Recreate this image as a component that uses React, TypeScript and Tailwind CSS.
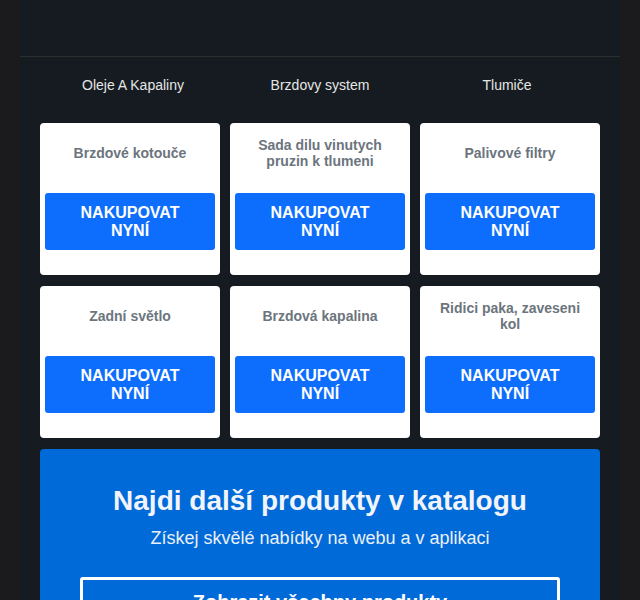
import React from "react";

const items = [
  "Brzdové kotouče",
  "Sada dilu vinutych pruzin k tlumeni",
  "Palivové filtry",
  "Zadní světlo",
  "Brzdová kapalina",
  "Ridici paka, zaveseni kol",
];

function Card({ title }: { title: string }) {
  return (
    <div className="bg-white rounded-[4px] px-[5px] pb-[25px] flex flex-col">
      <div className="h-[60px] flex items-center justify-center text-center px-[10px] text-[14px] leading-[16px] font-bold text-[#6c757d]">
        {title}
      </div>
      <div className="mt-[10px] h-[57px] bg-[#0d6efd] rounded-[3px] flex flex-col items-center justify-center text-white font-bold text-[16px] leading-[18px] text-center">
        <span>NAKUPOVAT</span>
        <span>NYNÍ</span>
      </div>
    </div>
  );
}

export default function App() {
  return (
    <div
      className="w-[640px] h-[600px] overflow-hidden bg-[#1b1a1c] px-[20px]"
      style={{ fontFamily: '"Liberation Sans", Arial, sans-serif' }}
    >
      <div className="bg-[#151b20] h-full">
        <div className="h-[57px] border-b border-[#283030]" />
        <div className="grid grid-cols-3 gap-[10px] px-[20px] h-[66px] pt-[20px] text-[#e6e6e6] text-[14px] leading-[16px]">
          <div className="text-center pl-[6px]">Oleje A Kapaliny</div>
          <div className="text-center">Brzdovy system</div>
          <div className="text-center pr-[6px]">Tlumiče</div>
        </div>
        <div className="grid grid-cols-3 gap-x-[10px] gap-y-[11px] px-[20px]">
          {items.map((t) => (
            <Card key={t} title={t} />
          ))}
        </div>
        <div className="mx-[20px] mt-[11px] bg-[#006ad8] rounded-[4px] pt-[35px] px-[40px] flex flex-col items-center text-center">
          <div className="text-[28px] leading-[34px] font-bold text-[#f2f4fb]">
            Najdi další produkty v katalogu
          </div>
          <div className="text-[18px] leading-[22px] mt-[9px] text-[#eaf0fa]">
            Získej skvělé nabídky na webu a v aplikaci
          </div>
          <div className="mt-[28px] w-full border-[3px] border-white rounded-[3px] py-[10px] text-white font-bold text-[20px] leading-[24px]">
            Zobrazit všechny produkty
          </div>
        </div>
      </div>
    </div>
  );
}
